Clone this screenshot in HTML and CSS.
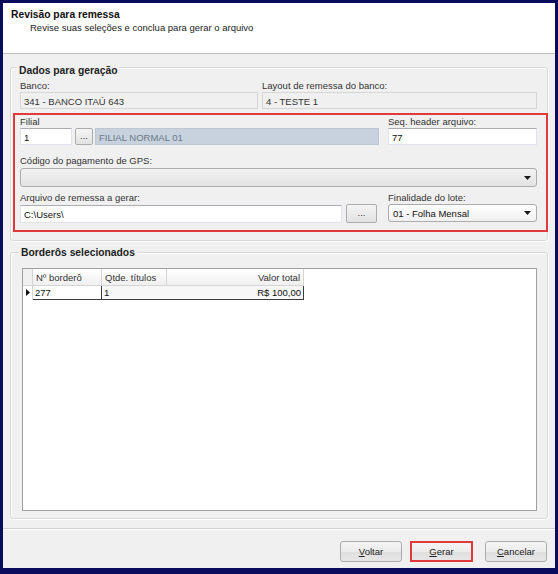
FILE: index.html
```html
<!DOCTYPE html>
<html lang="pt-BR">
<head>
    <meta charset="UTF-8">
    <meta name="viewport" content="width=device-width, initial-scale=1.0">
    <title>Revisão para remessa</title>
    <link rel="stylesheet" href="styles.css">
</head>
<body>
    <div class="window">
        <div class="header">
            <div class="header-title">Revisão para remessa</div>
            <div class="header-sub">Revise suas seleções e conclua para gerar o arquivo</div>
        </div>

        <div class="content">
            <div class="group group-dados">
                <div class="group-title">Dados para geração</div>
                <div class="row-banco">
                    <div class="field">
                        <div class="label">Banco:</div>
                        <div class="box box-readonly">341 - BANCO ITAÚ 643</div>
                    </div>
                    <div class="field">
                        <div class="label">Layout de remessa do banco:</div>
                        <div class="box box-readonly">4 - TESTE 1</div>
                    </div>
                </div>

                <div class="highlight">
                    <div class="field">
                        <div class="label">Filial</div>
                        <div class="inline inline-filial">
                            <div class="box box-input box-filial">1</div>
                            <div class="btn-dots">...</div>
                            <div class="box box-lookup">FILIAL NORMAL 01</div>
                        </div>
                    </div>
                    <div class="field">
                        <div class="label">Seq. header arquivo:</div>
                        <div class="box box-input">77</div>
                    </div>
                    <div class="field field-r2 span-2">
                        <div class="label">Código do pagamento de GPS:</div>
                        <div class="combo combo-disabled">
                            <span class="combo-text"></span>
                            <svg class="combo-arrow" width="7" height="4" viewBox="0 0 7 4"><path d="M0 0h7L3.5 4z" fill="#1a1a1a"/></svg>
                        </div>
                    </div>
                    <div class="field field-r3">
                        <div class="label">Arquivo de remessa a gerar:</div>
                        <div class="inline inline-arquivo">
                            <div class="box box-input box-arquivo">C:\Users\</div>
                            <div class="btn-dots btn-dots-wide">...</div>
                        </div>
                    </div>
                    <div class="field field-r3">
                        <div class="label">Finalidade do lote:</div>
                        <div class="combo combo-white">
                            <span class="combo-text">01 - Folha Mensal</span>
                            <svg class="combo-arrow" width="7" height="4" viewBox="0 0 7 4"><path d="M0 0h7L3.5 4z" fill="#1a1a1a"/></svg>
                        </div>
                    </div>
                </div>
            </div>

            <div class="group group-borderos">
                <div class="group-title">Borderôs selecionados</div>
                <div class="grid-wrap">
                    <table class="grid">
                        <thead>
                            <tr>
                                <th class="col-ind"></th>
                                <th class="col-num">Nº borderô</th>
                                <th class="col-qtd">Qtde. títulos</th>
                                <th class="col-valor">Valor total</th>
                            </tr>
                        </thead>
                        <tbody>
                            <tr class="row-current">
                                <td class="col-ind">
                                    <svg width="4" height="7" viewBox="0 0 4 7"><path d="M0 0l4 3.5L0 7z" fill="#111"/></svg>
                                </td>
                                <td class="col-num cell-edit">277</td>
                                <td class="col-qtd">1</td>
                                <td class="col-valor">R$ 100,00</td>
                            </tr>
                        </tbody>
                    </table>
                </div>
            </div>
        </div>

        <div class="footer">
            <button class="btn"><u>V</u>oltar</button>
            <button class="btn btn-marked"><u>G</u>erar</button>
            <button class="btn btn-cancel"><u>C</u>ancelar</button>
        </div>
    </div>
</body>
</html>
```

FILE: styles.css
```css
body {
    margin: 0;
    background-color: #0b0b5e;
    font-family: 'Liberation Sans', Arial, sans-serif;
    font-size: 9.5px;
    color: #1e1e1e;
}

.window {
    margin: 3px 3px 6px 3px;
    height: 565px;
    background-color: #f0f0f0;
    display: flex;
    flex-direction: column;
}

/* cabeçalho branco */
.header {
    height: 51px;
    box-sizing: border-box;
    background-color: #ffffff;
    border-bottom: 1px solid #bdbdbd;
    padding: 6px 0 0 8px;
}

.header-title {
    font-weight: bold;
    font-size: 10.3px;
    line-height: 12px;
    color: #111;
}

.header-sub {
    margin: 1px 0 0 19px;
    line-height: 12px;
    color: #222;
}

.content {
    flex: 1;
    padding: 13px 7px 0 7px;
}

/* group box */
.group {
    border: 1px solid #d8d8d8;
    border-radius: 3px;
    box-shadow: inset 1px 1px 0 #ffffff, 1px 1px 0 #ffffff;
}

.group-title {
    display: table;
    margin: -3px 0 0 -3px;
    padding: 0 2px;
    background-color: #f0f0f0;
    font-weight: bold;
    font-size: 10.3px;
    line-height: 12px;
    color: #222;
}

.group-dados {
    padding: 0 10px 8px 9px;
}

.label {
    line-height: 12px;
    color: #333;
    white-space: nowrap;
}

.row-banco {
    display: grid;
    grid-template-columns: 238px 1fr;
    gap: 4px;
    margin-top: 3px;
}

.box {
    height: 17px;
    line-height: 17px;
    padding: 0 3px;
    box-sizing: border-box;
    white-space: nowrap;
    overflow: hidden;
}

.box-readonly {
    background-color: #f0f0f0;
    border: 1px solid #d6d6d6;
    color: #333;
}

.box-input {
    background-color: #ffffff;
    border: 1px solid #e2e3ea;
    border-top-color: #abadb3;
    color: #111;
}

.box-lookup {
    flex: 1;
    background-color: #c7d2de;
    border: 1px solid #bcc7d2;
    color: #6b7886;
}

/* marcação vermelha */
.highlight {
    margin: 4px -11px 0 -7px;
    padding: 1px 9px 7px 5px;
    border: 2px solid #e2393d;
    display: grid;
    grid-template-columns: 359px 1fr;
    column-gap: 9px;
}

.span-2 {
    grid-column: span 2;
}

.field-r2 {
    margin-top: 10px;
}

.field-r2 .combo {
    margin-top: 1px;
}

.field-r3 {
    margin-top: 5px;
}

.inline {
    display: flex;
    align-items: center;
}

.inline-filial .box-filial {
    width: 52px;
    margin-right: 3px;
}

.btn-dots {
    width: 18px;
    height: 17px;
    box-sizing: border-box;
    border: 1px solid #acacac;
    border-radius: 2px;
    background: linear-gradient(#f4f4f4, #e2e2e2);
    text-align: center;
    line-height: 14px;
    color: #333;
    margin-right: 2px;
}

.inline-arquivo .box-arquivo {
    flex: 1;
    height: 18px;
    line-height: 18px;
    margin-right: 4px;
}

.btn-dots-wide {
    width: 31px;
    height: 19px;
    line-height: 16px;
    margin-right: 2px;
}

.combo {
    height: 19px;
    box-sizing: border-box;
    border: 1px solid #acacac;
    border-radius: 3px;
    display: flex;
    align-items: center;
    padding: 0 5px 0 4px;
}

.combo-disabled {
    background: linear-gradient(#f2f2f2, #e3e3e3);
}

.combo-white {
    height: 18px;
    background: linear-gradient(#ffffff, #f0f0f0);
}

.combo-text {
    flex: 1;
    color: #111;
}

/* grade de borderôs */
.group-borderos {
    margin-top: 11px;
    padding: 0 10px 7px 11px;
}

.group-borderos .group-title {
    margin-top: -6px;
}

.grid-wrap {
    margin-top: 9px;
    height: 241px;
    background-color: #ffffff;
    border: 1px solid #a0a0a0;
}

.grid {
    border-collapse: collapse;
    font-size: 9.5px;
}

.grid th {
    height: 16px;
    padding: 0 3px;
    font-weight: normal;
    text-align: left;
    color: #333;
    background: linear-gradient(#ffffff, #efefef);
    border-right: 1px solid #d5d5d5;
    border-bottom: 1px solid #d5d5d5;
}

.grid td {
    height: 13px;
    padding: 0 2px;
    color: #111;
    background-color: #f7f7f7;
}

.grid .col-ind {
    width: 9px;
    padding: 0;
    background: #f0f0f0;
    border-right: 1px solid #d5d5d5;
}

.grid td.col-ind {
    background: #ffffff;
    text-align: center;
}

.grid td.col-ind svg {
    display: block;
    margin: 0 auto;
}

.grid .col-num {
    width: 62px;
}

.grid .col-qtd {
    width: 58px;
}

.grid .col-valor {
    width: 130px;
    text-align: right;
}

.row-current td:not(.col-ind) {
    border-top: 1px solid #3c3c3c;
    border-bottom: 1px solid #3c3c3c;
}

.row-current td.col-valor {
    border-right: 1px solid #3c3c3c;
}

.row-current td.cell-edit {
    background-color: #ffffff;
    border-left: 1px solid #3c3c3c;
    border-right: 1px solid #3c3c3c;
}

/* rodapé */
.footer {
    height: 40px;
    box-sizing: border-box;
    border-top: 1px solid #cfcfcf;
    box-shadow: inset 0 1px 0 #ffffff;
    padding: 12px 8px 0 0;
    display: flex;
    justify-content: flex-end;
    align-items: flex-start;
    gap: 8px;
}

.btn {
    width: 62px;
    height: 21px;
    padding: 0;
    font-family: 'Liberation Sans', Arial, sans-serif;
    font-size: 9.5px;
    color: #222;
    border: 1px solid #acacac;
    border-radius: 3px;
    background: linear-gradient(#f4f4f4 0%, #ececec 50%, #dfdfdf 51%, #e6e6e6 100%);
}

.btn-marked {
    width: 63px;
    border: 2px solid #e2393d;
    border-radius: 0;
}

.btn-cancel {
    margin-left: 4px;
}
```
